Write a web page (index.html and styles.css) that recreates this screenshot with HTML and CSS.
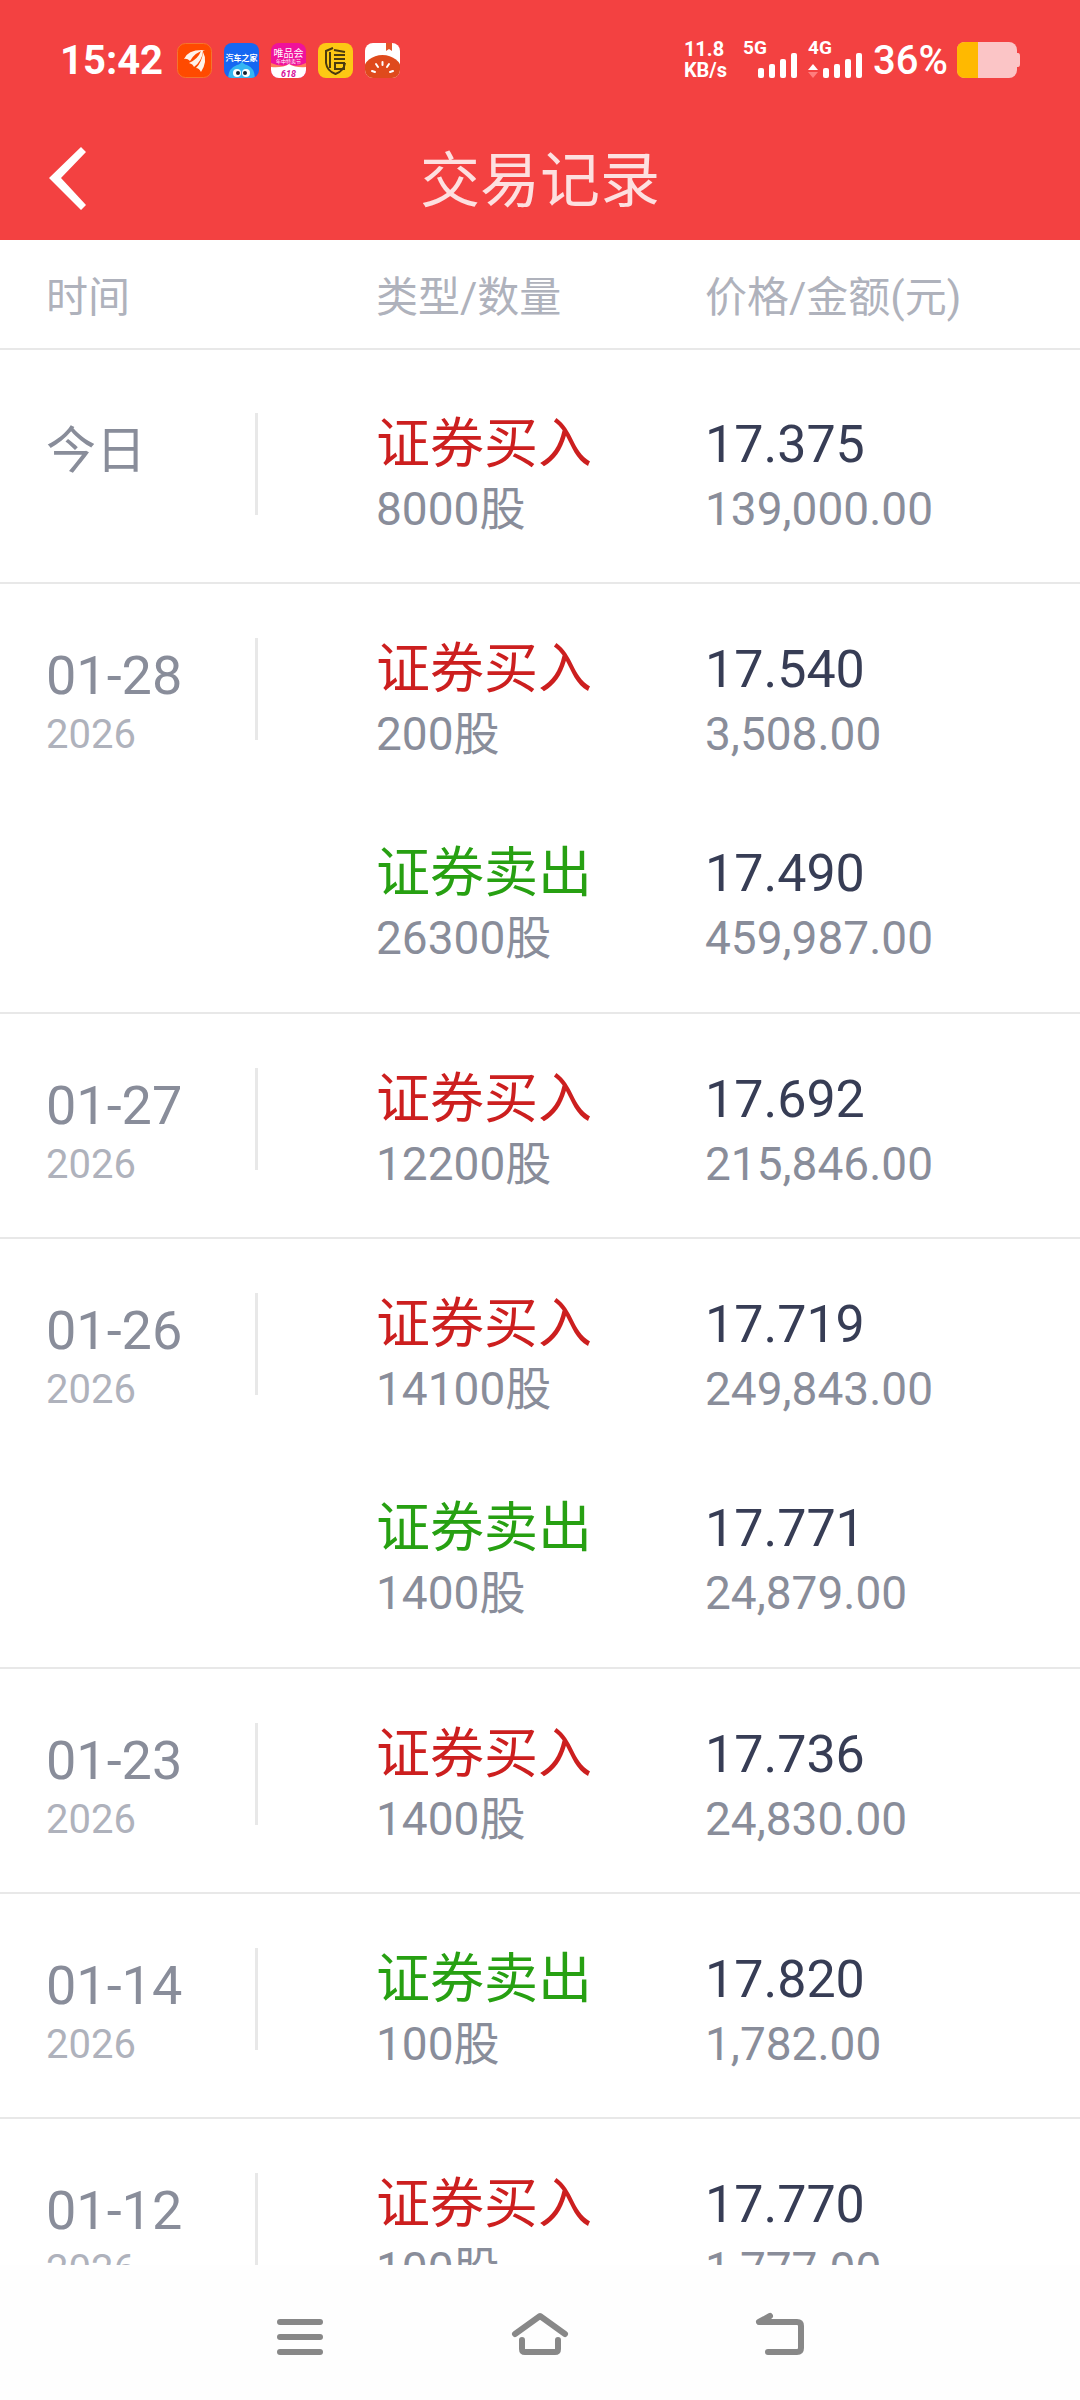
FILE: index.html
```html
<!DOCTYPE html>
<html lang="zh-CN">
<head>
<meta charset="utf-8">
<meta name="viewport" content="width=device-width, initial-scale=1">
<title>交易记录</title>
<link rel="stylesheet" href="styles.css">
</head>
<body>
<div class="app">
  <header class="top">
    <div class="status">
      <span class="clock">15:42</span>
      <div class="tray">
        <svg class="app-icon" viewBox="0 0 35 35"><rect x=".5" y=".5" width="34" height="34" rx="8" fill="#ff4a00" stroke="#f5742e"/><g fill="#fff3ea"><path d="M7 16Q11 6 28 7Q18 9 13 18Q10 15 7 16Z"/><path d="M12 20Q21 16 24 8L26 8Q25 18 17 24Q16 21 12 20Z"/><path d="M19 25Q25 19 26 9Q31 18 24 29Q22 25 19 25Z"/></g></svg>
        <svg class="app-icon" viewBox="0 0 35 35"><defs><clipPath id="auto"><rect width="35" height="35" rx="8"/></clipPath></defs><g clip-path="url(#auto)"><rect width="35" height="35" fill="#1667f2"/><path d="M4 36Q4 25 13 22Q17 21 18 18Q19 21 23 22Q31 25 31 36Z" fill="#35b6f2"/><circle cx="13" cy="30" r="4" fill="#fff"/><circle cx="22" cy="30" r="4" fill="#fff"/><circle cx="14" cy="30" r="2" fill="#123"/><circle cx="21" cy="30" r="2" fill="#123"/></g><text x="17.500" y="18" font-size="8" font-weight="700" text-anchor="middle" fill="#fff">汽车之家</text></svg>
        <svg class="app-icon" viewBox="0 0 35 35"><defs><clipPath id="vip"><rect width="35" height="35" rx="8"/></clipPath></defs><g clip-path="url(#vip)"><rect width="35" height="35" fill="#f0129b"/><path d="M0 20Q12 25 18 21Q25 25 35 20V26H0Z" fill="#ff7a5c"/><path d="M0 24Q12 25 18 21Q25 25 35 24V35H0Z" fill="#fff"/></g><text x="17.500" y="14" font-size="10" text-anchor="middle" fill="#fff">唯品会</text><text x="17.500" y="20" font-size="5" text-anchor="middle" fill="#fff">年中特卖节</text><text x="17.500" y="34" font-size="9" font-weight="700" font-style="italic" text-anchor="middle" fill="#d8129b">618</text></svg>
        <svg class="app-icon" viewBox="0 0 35 35"><rect width="35" height="35" rx="8" fill="#fdc814"/><g fill="none" stroke="#4a3a10" stroke-width="2"><path d="M15 5L8 8V20Q9 28 17.500 31Q26 28 27 20M12 9V25M16 7L27 9M16 12H27M16 16H27M16 20H26V26H17V20"/></g></svg>
        <svg class="app-icon" viewBox="0 0 35 35"><defs><clipPath id="tom"><rect width="35" height="35" rx="8"/></clipPath></defs><g clip-path="url(#tom)"><rect width="35" height="35" fill="#fff"/><path d="M21 0H27V8L24 6L21 8Z" fill="#e4552a"/><ellipse cx="17.500" cy="27" rx="19" ry="15" fill="#df4a1c"/></g><g stroke="#fff" stroke-width="2" stroke-linecap="round"><path d="M17.500 19V22M11 21L13 24M24 21L22 24M7 28L10 29M28 28L25 29"/></g></svg>
      </div>
      <div class="signals">
        <span class="speed"><span>11.8</span><span>KB/s</span></span>
        <span class="net"><span class="net-name">5G</span>
          <svg class="bars" viewBox="0 0 54 25"><g fill="#fff"><rect x="15" y="15" width="6" height="10" rx="2"/><rect x="26" y="11" width="6" height="14" rx="2"/><rect x="37" y="6" width="6" height="19" rx="2"/><rect x="48" y="0" width="6" height="25" rx="2"/></g></svg>
        </span>
        <span class="net"><span class="net-name">4G</span>
          <svg class="bars" viewBox="0 0 54 25"><path d="M0 17L5 11L10 17Z" fill="#fff"/><path d="M0 19L5 25L10 19Z" fill="#ff7d7d"/><g fill="#fff"><rect x="15" y="15" width="6" height="10" rx="2"/><rect x="26" y="11" width="6" height="14" rx="2"/><rect x="37" y="6" width="6" height="19" rx="2"/><rect x="48" y="0" width="6" height="25" rx="2"/></g></svg>
        </span>
        <span class="percent">36%</span>
        <svg class="battery" viewBox="0 0 63 36"><rect width="60" height="36" rx="8" fill="#fbc5c6"/><path d="M60 11H61Q63 11 63 14V22Q63 25 61 25H60Z" fill="#fbc5c6"/><path d="M21 0H8Q0 0 0 8V28Q0 36 8 36H21Z" fill="#ffb900"/></svg>
      </div>
    </div>
    <div class="titlebar">
      <button class="back" aria-label="返回"><svg viewBox="0 0 37 63"><path d="M32 0L37 5L12 31L37 58L32 63L0 31Z" fill="#fff"/></svg></button>
      <h1>交易记录</h1>
    </div>
  </header>

  <main class="records">
    <table>
      <thead><tr><th>时间</th><th>类型/数量</th><th>价格/金额(元)</th></tr></thead>
      <tbody class="today">
        <tr><td><div class="date"><b>今日</b></div></td><td><b class="buy">证券买入</b><span>8000股</span></td><td><b>17.375</b><span>139,000.00</span></td></tr>
      </tbody>
      <tbody>
        <tr><td><div class="date"><b>01-28</b><small>2026</small></div></td><td><b class="buy">证券买入</b><span>200股</span></td><td><b>17.540</b><span>3,508.00</span></td></tr>
        <tr><td></td><td><b class="sell">证券卖出</b><span>26300股</span></td><td><b>17.490</b><span>459,987.00</span></td></tr>
      </tbody>
      <tbody>
        <tr><td><div class="date"><b>01-27</b><small>2026</small></div></td><td><b class="buy">证券买入</b><span>12200股</span></td><td><b>17.692</b><span>215,846.00</span></td></tr>
      </tbody>
      <tbody>
        <tr><td><div class="date"><b>01-26</b><small>2026</small></div></td><td><b class="buy">证券买入</b><span>14100股</span></td><td><b>17.719</b><span>249,843.00</span></td></tr>
        <tr><td></td><td><b class="sell">证券卖出</b><span>1400股</span></td><td><b>17.771</b><span>24,879.00</span></td></tr>
      </tbody>
      <tbody>
        <tr><td><div class="date"><b>01-23</b><small>2026</small></div></td><td><b class="buy">证券买入</b><span>1400股</span></td><td><b>17.736</b><span>24,830.00</span></td></tr>
      </tbody>
      <tbody>
        <tr><td><div class="date"><b>01-14</b><small>2026</small></div></td><td><b class="sell">证券卖出</b><span>100股</span></td><td><b>17.820</b><span>1,782.00</span></td></tr>
      </tbody>
      <tbody>
        <tr><td><div class="date"><b>01-12</b><small>2026</small></div></td><td><b class="buy">证券买入</b><span>100股</span></td><td><b>17.770</b><span>1,777.00</span></td></tr>
      </tbody>
    </table>
  </main>

  <nav class="sysnav">
    <button aria-label="最近任务"><svg viewBox="0 0 60 48"><g fill="#888"><rect x="7" y="10" width="46" height="6" rx="3"/><rect x="7" y="25" width="46" height="6" rx="3"/><rect x="7" y="40" width="46" height="6" rx="3"/></g></svg></button>
    <button aria-label="主屏幕"><svg viewBox="0 0 60 48"><g fill="none" stroke="#888" stroke-width="6" stroke-linecap="round" stroke-linejoin="round"><path d="M5 25L30 7L55 25"/><path d="M12 31V40Q12 43 15 43H45Q48 43 48 40V31"/></g></svg></button>
    <button aria-label="返回上一级"><svg viewBox="0 0 60 48"><path d="M20 7L9 13H47Q51 13 51 17V39Q51 43 47 43H18" fill="none" stroke="#888" stroke-width="6" stroke-linecap="round" stroke-linejoin="round"/></svg></button>
  </nav>
</div>
</body>
</html>
```
FILE: styles.css
```css
* { box-sizing: border-box; }

body {
  margin: 0;
  background: #fff;
  color: #373d55;
  font-family: Roboto, "Noto Sans CJK SC", sans-serif;
}

button { padding: 0; border: 0; background: none; }
svg { display: block; }

.app { display: flex; flex-direction: column; height: 100vh; }

/* Header */
.top { flex: none; background: #f34141; color: #fff; }
.status { display: flex; align-items: center; height: 120px; padding: 0 60px; }
.clock { font-size: 40px; font-weight: 700; }
.tray { display: flex; gap: 12px; margin-left: 14px; }
.app-icon { width: 35px; height: 35px; }
.signals { display: flex; align-items: center; margin-left: auto; }
.speed { display: flex; flex-direction: column; margin-right: 16px; font-size: 20px; font-weight: 700; line-height: 21px; }
.net { display: flex; flex-direction: column; width: 54px; margin-right: 11px; }
.net-name { font-size: 19px; font-weight: 700; line-height: 11px; }
.bars { width: 54px; height: 25px; }
.percent { margin-right: 9px; font-size: 40px; font-weight: 500; }
.battery { width: 63px; height: 36px; }

.titlebar { display: grid; grid-template-columns: 1fr auto 1fr; align-items: center; height: 120px; padding: 0 49px 4px; }
.back svg { width: 37px; height: 63px; }
.back { width: 37px; }
h1 { margin: 0; padding-top: 8px; color: #fde0e0; font-size: 60px; font-weight: 400; line-height: 64px; }

/* Trade list */
.records { flex: 1; min-height: 0; overflow: hidden; }
table { width: 100%; table-layout: fixed; border-collapse: collapse; }
th, td { padding: 0; text-align: left; vertical-align: top; }
th { height: 109px; padding-bottom: 2px; vertical-align: middle; color: #afb2bc; font-size: 42px; font-weight: 400; }
th:first-child, td:first-child { width: 376px; padding-left: 46px; }
th:nth-child(2) { width: 329px; }
thead tr, tbody { border-bottom: 2px solid #e8e8e8; }

td { height: 205px; padding-top: 54px; }
tbody tr:last-child td { height: 225px; }
.today tr:last-child td { height: 234px; padding-top: 63px; }
td b, td span, td small { display: block; font-weight: 400; }
td b { font-size: 52px; line-height: 64px; }
td span { color: #898d9a; font-size: 46px; line-height: 64px; }
td .buy, td .sell { font-size: 54px; }
.buy { color: #cc1f1f; }
.sell { color: #27a012; }
.date { width: 212px; height: 102px; padding-top: 6px; border-right: 3px solid #e8e8e8; color: #898d9a; }
.date b { font-size: 54px; }
.today .date b { font-size: 50px; }
.date small { color: #afb2bc; font-size: 40px; line-height: 54px; }

/* System navigation */
.sysnav { flex: none; display: flex; justify-content: center; align-items: center; gap: 180px; height: 135px; background: #fefefe; }
.sysnav svg { width: 60px; height: 48px; }
```
